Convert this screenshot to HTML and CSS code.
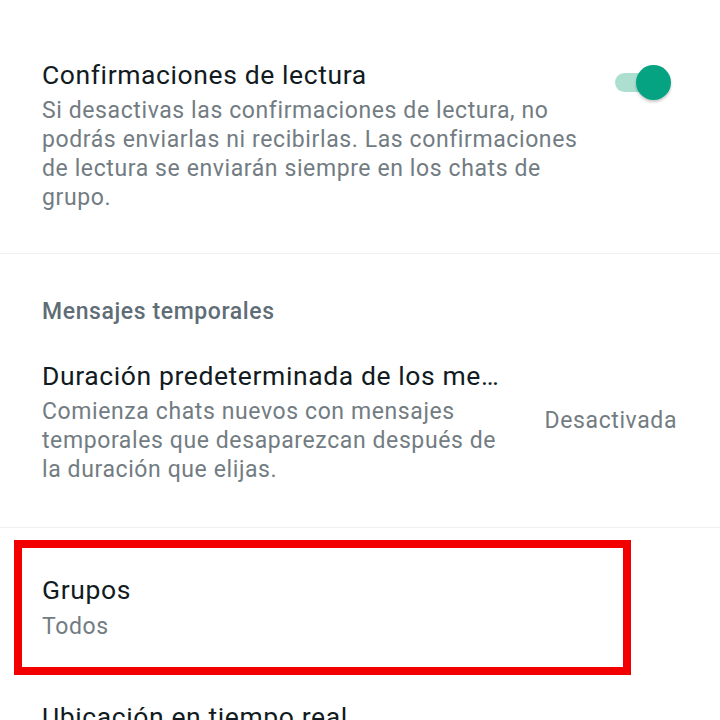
FILE: index.html
```html
<!DOCTYPE html>
<html lang="es">
<head>
    <meta charset="UTF-8">
    <meta name="viewport" content="width=device-width, initial-scale=1.0">
    <title>Privacidad</title>
    <link rel="stylesheet" href="styles.css">
</head>
<body>
    <!-- Confirmaciones de lectura -->
    <section class="block block-first">
        <div class="item">
            <div class="item-text">
                <div class="item-title">Confirmaciones de lectura</div>
                <div class="item-desc">Si desactivas las confirmaciones de lectura, no podrás enviarlas ni recibirlas. Las confirmaciones de lectura se enviarán siempre en los chats de grupo.</div>
            </div>
            <div class="switch on">
                <span class="switch-track"></span>
                <span class="switch-thumb"></span>
            </div>
        </div>
    </section>

    <!-- Mensajes temporales -->
    <section class="block">
        <div class="block-header">Mensajes temporales</div>
        <div class="item item-center">
            <div class="item-text">
                <div class="item-title truncate">Duración predeterminada de los mensajes</div>
                <div class="item-desc">Comienza chats nuevos con mensajes temporales que desaparezcan después de la duración que elijas.</div>
            </div>
            <div class="item-value">Desactivada</div>
        </div>
    </section>

    <div class="highlight">
        <div class="item-title">Grupos</div>
        <div class="item-desc">Todos</div>
    </div>

    <div class="item item-plain">
        <div class="item-title">Ubicación en tiempo real</div>
    </div>
</body>
</html>
```

FILE: styles.css
```css
body {
    margin: 0;
    background: #ffffff;
    font-family: Roboto, "Noto Sans", sans-serif;
    color: #111b21;
}
.block {
    padding: 43px 0 43px;
    border-bottom: 1px solid #eef0f1;
}
.block-first {
    padding-top: 60px;
    padding-bottom: 41px;
}
.block-header {
    padding: 0 42px;
    font-size: 23px;
    line-height: 29px;
    font-weight: 500;
    letter-spacing: 0.6px;
    color: #5f6d76;
    margin-bottom: 35px;
}
.item {
    display: flex;
    align-items: flex-start;
    padding: 0 43px 0 42px;
}
.item-center {
    align-items: center;
}
.item-text {
    flex: 1;
    min-width: 0;
}
.item-title {
    font-size: 26.5px;
    line-height: 30px;
    letter-spacing: 0.6px;
    color: #111b21;
}
.item-desc {
    margin-top: 6px;
    font-size: 23px;
    line-height: 29px;
    letter-spacing: 0.6px;
    color: #727c82;
}
.truncate {
    white-space: nowrap;
    overflow: hidden;
    text-overflow: ellipsis;
}
.item-value {
    margin: -5px 0 0 32px;
    font-size: 23px;
    line-height: 29px;
    letter-spacing: 0.6px;
    color: #727c82;
}
.switch {
    position: relative;
    flex: none;
    width: 56px;
    height: 36px;
    margin: 5px 6px 0 16px;
}
.switch-track {
    position: absolute;
    left: 0;
    top: 8px;
    width: 44px;
    height: 19px;
    border-radius: 10px;
    background: #acdfcf;
}
.switch-thumb {
    position: absolute;
    right: 0;
    top: 0;
    width: 35px;
    height: 35px;
    border-radius: 50%;
    background: #06a383;
    box-shadow: 0 2px 3px rgba(0, 0, 0, 0.22);
}
.highlight {
    margin: 12px 0 0 14px;
    width: 561px;
    padding: 27px 20px 26px;
    border: 8px solid #f20000;
}
.highlight .item-desc {
    margin-top: 7px;
}
.item-plain {
    margin-top: 27px;
}
```
